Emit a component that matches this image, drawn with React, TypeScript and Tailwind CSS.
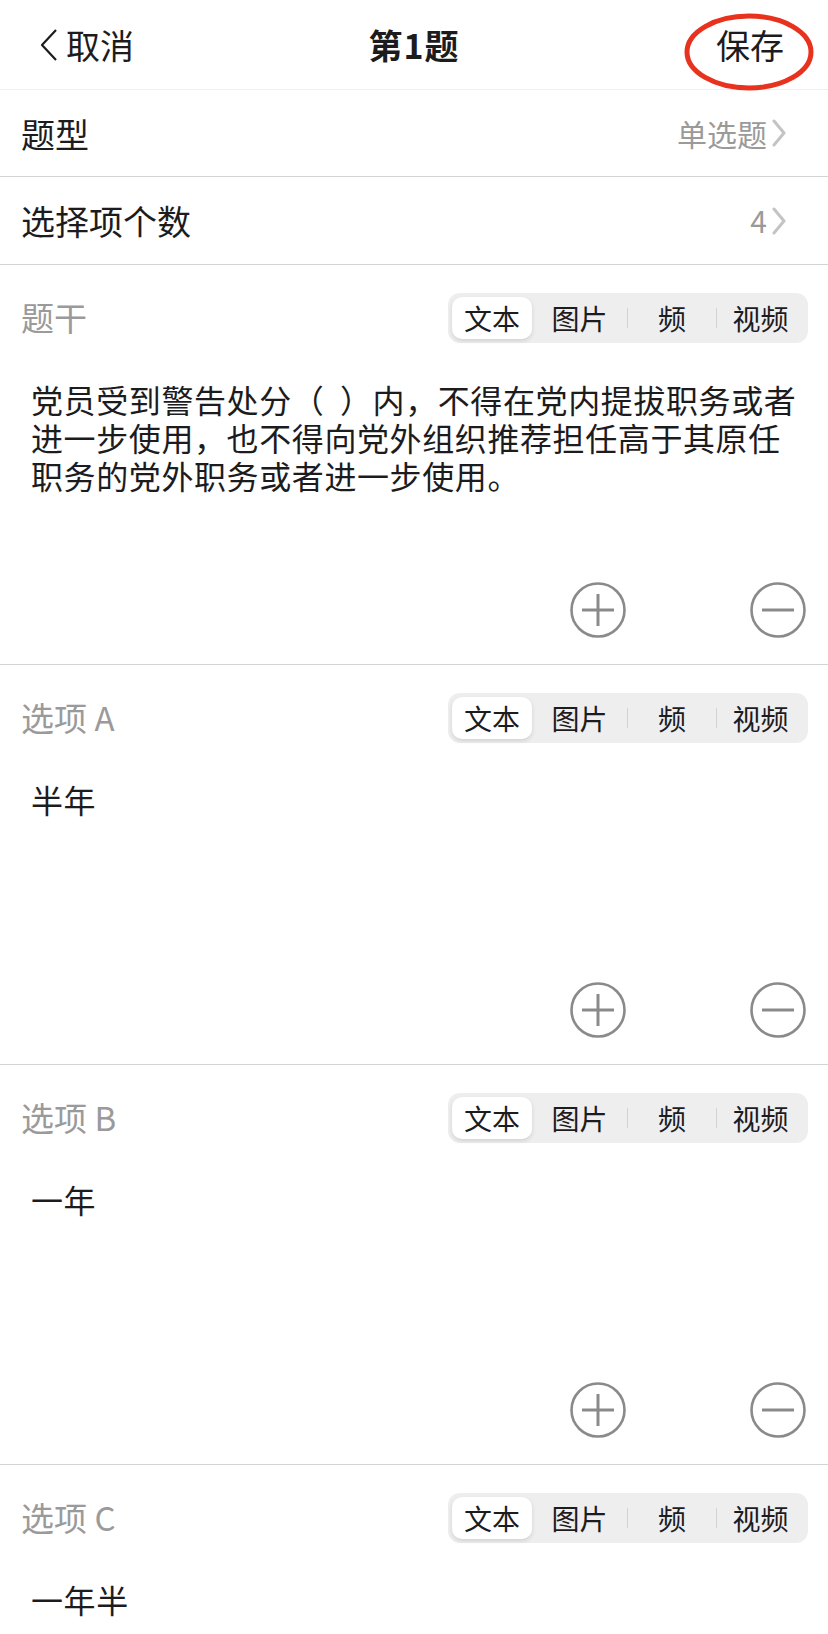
import React from "react";

const sections = [
  {
    label: "题干",
    text: "党员受到警告处分（  ）内，不得在党内提拔职务或者进一步使用，也不得向党外组织推荐担任高于其原任职务的党外职务或者进一步使用。",
  },
  { label: "选项 A", text: "半年" },
  { label: "选项 B", text: "一年" },
  { label: "选项 C", text: "一年半" },
];

const Chevron = () => (
  <svg width="14" height="28" viewBox="0 0 14 28" className="ml-[5px]">
    <polyline points="2,2 12,14 2,26" fill="none" stroke="#c4c4c4" strokeWidth="3" strokeLinecap="round" strokeLinejoin="round" />
  </svg>
);

const CircleBtn = ({ plus }: { plus?: boolean }) => (
  <svg width="56" height="56" viewBox="0 0 56 56">
    <circle cx="28" cy="28" r="26.5" fill="none" stroke="#8a8a8a" strokeWidth="2.6" />
    <line x1="12" y1="28" x2="44" y2="28" stroke="#8a8a8a" strokeWidth="3" />
    {plus && <line x1="28" y1="12" x2="28" y2="44" stroke="#8a8a8a" strokeWidth="3" />}
  </svg>
);

const Segmented = () => (
  <div className="mr-[20px] flex h-[50px] w-[360px] items-center rounded-[12px] bg-[#eeeeef] p-[4px] text-[28px] text-[#1c1c1e]">
    <div className="flex h-full w-[80px] items-center justify-center rounded-[10px] bg-white shadow-[0_2px_4px_rgba(0,0,0,0.12)]">
      文本
    </div>
    <div className="flex h-full w-[95px] items-center justify-center">图片</div>
    <div className="h-[20px] w-px bg-[#d2d2d4]" />
    <div className="flex h-full w-[88px] items-center justify-center">频</div>
    <div className="h-[20px] w-px bg-[#d2d2d4]" />
    <div className="flex h-full w-[87px] items-center justify-center">视频</div>
  </div>
);

const Section = ({ label, text }: { label: string; text: string }) => (
  <div className="flex h-[400px] flex-col border-b border-[#d4d4d4]">
    <div className="flex items-center justify-between pt-[28px]">
      <span className="whitespace-pre pl-[21px] text-[33px] text-[#9a9a9a]">{label}</span>
      <Segmented />
    </div>
    <p className="mt-[37px] flex-1 whitespace-pre-wrap pl-[31px] pr-[20px] text-[32px] leading-[38px] tracking-[0.6px] text-[#1c1c1e]">
      {text}
    </p>
    <div className="flex justify-end gap-[124px] pb-[26px] pr-[22px]">
      <CircleBtn plus />
      <CircleBtn />
    </div>
  </div>
);

export default function App() {
  return (
    <div className="min-h-screen w-[828px] overflow-hidden bg-white font-['Noto_Sans_CJK_SC',sans-serif] text-[#1c1c1e]">
      <div className="grid h-[90px] grid-cols-[1fr_auto_1fr] items-center border-b border-[#efefef]">
        <div className="flex items-center pl-[40px]">
          <svg width="18" height="32" viewBox="0 0 18 32">
            <polyline points="16,1 2,16 16,31" fill="none" stroke="#1c1c1e" strokeWidth="2.2" strokeLinejoin="round" />
          </svg>
          <span className="ml-[8px] text-[34px]">取消</span>
        </div>
        <span className="text-[34px] font-bold tracking-[1px]">第1题</span>
        <div className="flex justify-end pr-[44px]">
          <div className="relative">
            <span className="text-[34px]">保存</span>
            <svg width="132" height="80" viewBox="0 0 132 80" className="absolute left-[-33px] top-[-7px]">
              <ellipse cx="66" cy="40" rx="62" ry="36" fill="none" stroke="#e8321e" strokeWidth="5" />
            </svg>
          </div>
        </div>
      </div>
      <div className="flex h-[87px] items-center justify-between border-b border-[#d4d4d4] pl-[21px] pr-[42px]">
        <span className="text-[34px]">题型</span>
        <div className="flex items-center text-[30px] text-[#9a9a9a]">
          单选题
          <Chevron />
        </div>
      </div>
      <div className="flex h-[88px] items-center justify-between border-b border-[#d4d4d4] pl-[21px] pr-[42px]">
        <span className="text-[34px]">选择项个数</span>
        <div className="flex items-center text-[30px] text-[#9a9a9a]">
          4
          <Chevron />
        </div>
      </div>
      {sections.map((s) => (
        <Section key={s.label} label={s.label} text={s.text} />
      ))}
    </div>
  );
}
